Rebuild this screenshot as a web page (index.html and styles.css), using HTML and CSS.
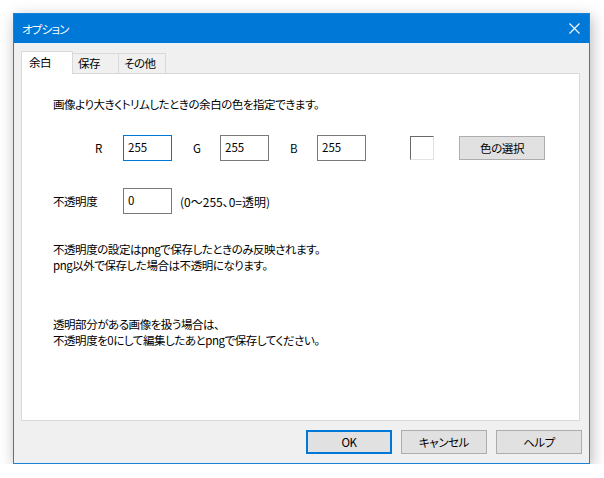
FILE: index.html
```html
<!DOCTYPE html>
<html lang="ja">
<head>
    <meta charset="UTF-8">
    <meta name="viewport" content="width=device-width, initial-scale=1.0">
    <title>オプション</title>
    <link rel="stylesheet" href="styles.css">
</head>
<body>
    <div class="screen">
        <div class="dialog">
            <div class="titlebar">
                <span class="title">オプション</span>
                <svg class="close" width="11" height="11" viewBox="0 0 11 11">
                    <path d="M0.5 0.5 L10.5 10.5 M10.5 0.5 L0.5 10.5" stroke="#fff" stroke-width="1.1" fill="none"/>
                </svg>
            </div>
            <div class="dialogBody">
                <div class="tabs">
                    <div class="tab active">余白</div>
                    <div class="tab">保存</div>
                    <div class="tab last">その他</div>
                </div>
                <div class="panel">
                    <p class="lead">画像より大きくトリムしたときの余白の色を指定できます。</p>
                    <div class="rgbRow">
                        <span class="chLabel first">R</span>
                        <div class="field focused">255</div>
                        <span class="chLabel">G</span>
                        <div class="field">255</div>
                        <span class="chLabel">B</span>
                        <div class="field">255</div>
                        <div class="swatch"></div>
                        <button class="btn pick">色の選択</button>
                    </div>
                    <div class="alphaRow">
                        <span class="alphaLabel">不透明度</span>
                        <div class="field">0</div>
                        <span class="hint">(0〜255、0=透明)</span>
                    </div>
                    <p class="note">不透明度の設定はpngで保存したときのみ反映されます。<br>png以外で保存した場合は不透明になります。</p>
                    <p class="note second">透明部分がある画像を扱う場合は、<br>不透明度を0にして編集したあとpngで保存してください。</p>
                </div>
                <div class="actions">
                    <button class="btn default">OK</button>
                    <button class="btn">キャンセル</button>
                    <button class="btn">ヘルプ</button>
                </div>
            </div>
        </div>
    </div>
</body>
</html>
```

FILE: styles.css
```css
*{
    margin: 0;
    padding: 0;
    box-sizing: border-box;
}
body{
    background-color: #ffffff;
    font-family: "Noto Sans CJK JP", "Noto Sans", sans-serif;
    font-size: 11.5px;
    letter-spacing: -0.45px;
    font-feature-settings: "palt";
    color: #000000;
}
.screen{
    padding: 13px 0 0 13px;
}
.dialog{
    width: 577px;
    height: 451px;
    border: 1px solid #1883d7;
    background-color: #f0f0f0;
    box-shadow: 2px 4px 14px rgba(0, 0, 0, 0.28);
}
.titlebar{
    height: 29px;
    background-color: #0078d7;
    color: #ffffff;
    display: flex;
    align-items: center;
    justify-content: space-between;
    padding: 0 9px 0 8px;
}
.title{
    line-height: 16px;
    letter-spacing: -0.8px;
}
.close{
    display: block;
}
.dialogBody{
    padding: 8px 7px 0 7px;
}
.tabs{
    display: flex;
    align-items: flex-end;
    height: 22px;
}
.tab{
    height: 20px;
    line-height: 19px;
    border: 1px solid #d9d9d9;
    border-bottom: 0;
    border-left: 0;
    width: 46px;
    padding-left: 5px;
}
.tab.last{
    width: 47px;
}
.tab.active{
    width: 52px;
    height: 23px;
    line-height: 21px;
    padding-left: 7px;
    border-left: 1px solid #d9d9d9;
    background-color: #ffffff;
    margin-bottom: -1px;
    position: relative;
    z-index: 1;
}
.panel{
    width: 559px;
    height: 348px;
    border: 1px solid #d9d9d9;
    background-color: #ffffff;
    padding: 22px 0 0 31px;
}
.lead{
    line-height: 16px;
}
.rgbRow{
    display: flex;
    align-items: center;
    margin-top: 23px;
    height: 26px;
}
.chLabel{
    width: 27px;
    margin-left: 21px;
}
.chLabel.first{
    margin-left: 42px;
    width: 28px;
}
.field{
    width: 49px;
    height: 26px;
    border: 1px solid #7a7a7a;
    padding: 2px 0 0 4px;
    line-height: 18px;
    letter-spacing: 0;
}
.field.focused{
    border-color: #0078d7;
}
.swatch{
    width: 24px;
    height: 24px;
    margin-left: 44px;
    border: 1px solid #e3e3e3;
    border-top-color: #696969;
    border-left-color: #696969;
    background-color: #ffffff;
}
.btn{
    font-family: inherit;
    font-size: 11.5px;
    letter-spacing: -0.4px;
    font-feature-settings: "palt";
    color: #000000;
    width: 86px;
    height: 24px;
    background-color: #e1e1e1;
    border: 1px solid #adadad;
}
.btn.pick{
    margin-left: 25px;
}
.btn.default{
    border: 2px solid #0078d7;
}
.alphaRow{
    display: flex;
    align-items: center;
    margin-top: 27px;
    height: 26px;
}
.alphaLabel{
    width: 70px;
}
.hint{
    margin-left: 8px;
    font-size: 12px;
    letter-spacing: 0;
}
.note{
    line-height: 16px;
    margin-top: 27px;
}
.note.second{
    margin-top: 43px;
}
.actions{
    display: flex;
    justify-content: flex-end;
    gap: 9px;
    margin-top: 9px;
}
```
